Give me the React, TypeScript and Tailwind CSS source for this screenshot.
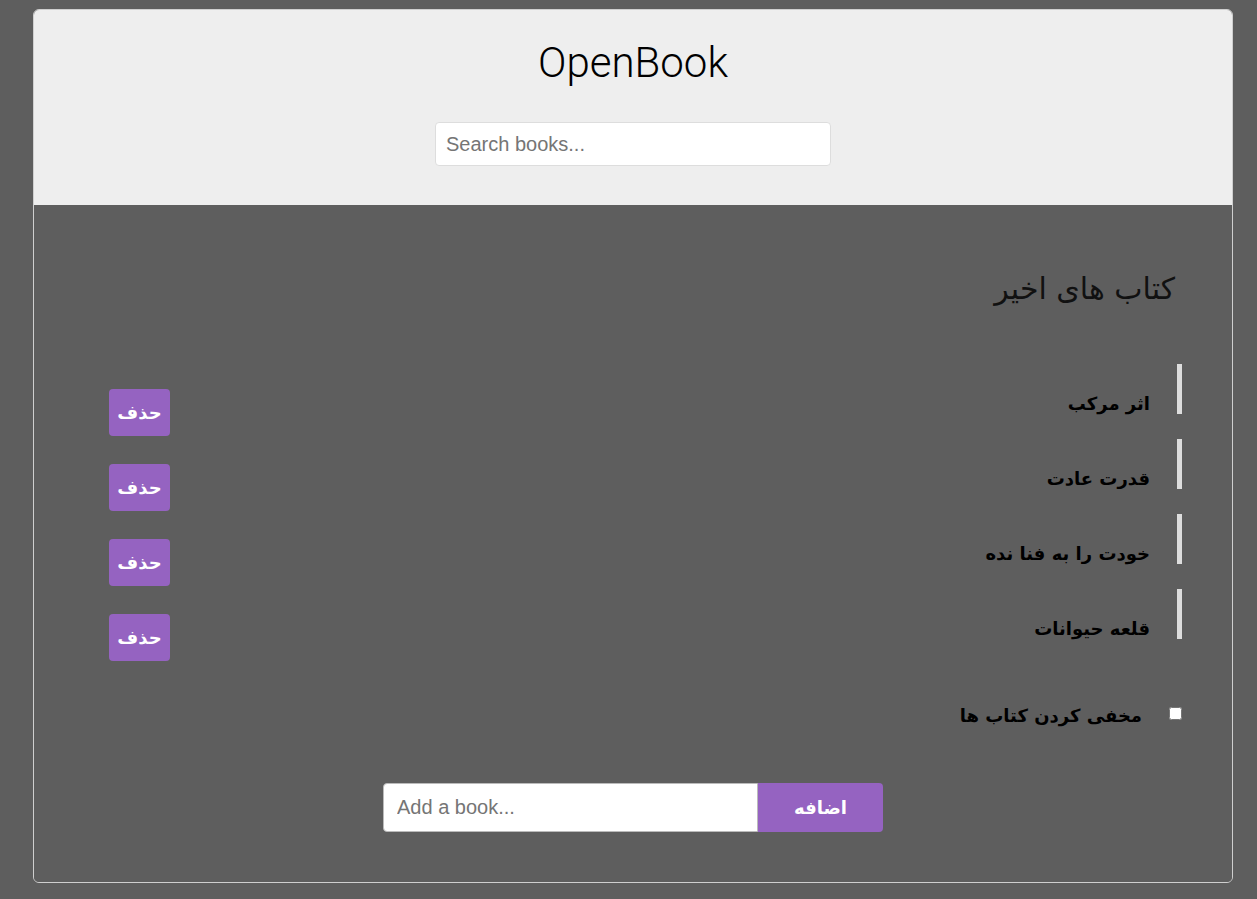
import React from "react";

const books = ["اثر مرکب", "قدرت عادت", "خودت را به فنا نده", "قلعه حیوانات"];

export default function App() {
  return (
    <div className="min-h-[899px] bg-[#5e5e5e] pt-[9px] pb-[15px]">
      <div className="ml-[33px] w-[1200px] rounded-[6px] border border-[#cfcfcf] overflow-hidden">
        <header className="h-[195px] bg-[#eeeeee] flex flex-col items-center pt-[28px]">
          <h1
            className="text-[42px] leading-[50px] font-light text-black"
            style={{ fontFamily: "Roboto, 'Noto Sans', sans-serif" }}
          >
            OpenBook
          </h1>
          <input
            type="text"
            placeholder="Search books..."
            className="mt-[34px] w-[396px] h-[44px] rounded-[4px] border border-[#dddddd] bg-white px-[10px] text-[20px] text-black placeholder:text-[#757575] outline-none"
            style={{ fontFamily: "'Liberation Sans', Arial, sans-serif" }}
          />
        </header>
        <main
          dir="rtl"
          className="bg-[#5e5e5e] pt-[66px] pb-[50px] pr-[50px] pl-[75px]"
          style={{ fontFamily: "'DejaVu Sans'" }}
        >
          <h2 className="pr-[7px] text-[30px] leading-[36px] font-normal text-[#111111]">
            کتاب های اخیر
          </h2>
          <ul className="mt-[57px] flex flex-col gap-[25px]">
            {books.map((b) => (
              <li key={b} className="flex justify-between items-start h-[50px]">
                <div className="h-[50px] border-r-[5px] border-[#dddddd] pr-[27px] pt-[29px]">
                  <span className="text-[18px] leading-[22px] font-bold text-black whitespace-nowrap">
                    {b}
                  </span>
                </div>
                <button className="mt-[25px] w-[61px] h-[47px] rounded-[4px] bg-[#9563c1] text-white text-[18px] font-bold leading-[22px]">
                  حذف
                </button>
              </li>
            ))}
          </ul>
          <div className="mt-[62px] flex items-center gap-[27px] h-[24px]">
            <input
              type="checkbox"
              className="w-[13px] h-[13px] m-0 appearance-auto"
            />
            <label className="mt-[6px] text-[18px] leading-[22px] font-bold text-black">
              مخفی کردن کتاب ها
            </label>
          </div>
          <div dir="ltr" className="mt-[58px] ml-[-75px] mr-[-50px] flex justify-center">
            <input
              type="text"
              placeholder="Add a book..."
              className="w-[375px] h-[49px] rounded-l-[4px] border border-[#bbbbbb] bg-white px-[13px] text-[20px] text-black placeholder:text-[#757575] outline-none"
              style={{ fontFamily: "'Liberation Sans', Arial, sans-serif" }}
            />
            <button className="w-[125px] h-[49px] rounded-r-[4px] bg-[#9563c1] text-white text-[18px] font-bold">
              اضافه
            </button>
          </div>
        </main>
      </div>
    </div>
  );
}
